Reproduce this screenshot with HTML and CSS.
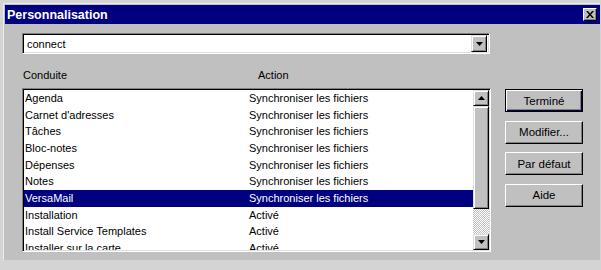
FILE: index.html
```html
<!DOCTYPE html>
<html lang="fr">
<head>
<meta charset="utf-8">
<title>Personnalisation</title>
<link rel="stylesheet" href="styles.css">
</head>
<body>
<div class="window">
  <div class="titlebar">
    <span class="title">Personnalisation</span>
    <span class="close"><svg width="8" height="7" viewBox="0 0 8 7"><path d="M0 0h2l2 2.5L6 0h2L5 3.5 8 7H6L4 4.5 2 7H0l3-3.5z" fill="#000"/></svg></span>
  </div>
  <div class="content">
    <div class="combo">
      <span class="combo-text">connect</span>
      <span class="btn3d dd"><svg width="7" height="4" viewBox="0 0 7 4"><path d="M0 0h7L3.5 4z" fill="#000"/></svg></span>
    </div>
    <div class="main">
      <div class="left">
        <div class="headers">
          <span class="h1">Conduite</span>
          <span class="h2">Action</span>
        </div>
        <div class="list">
          <div class="rows">
            <div class="row"><span class="c1">Agenda</span><span>Synchroniser les fichiers</span></div>
            <div class="row"><span class="c1">Carnet d'adresses</span><span>Synchroniser les fichiers</span></div>
            <div class="row"><span class="c1">Tâches</span><span>Synchroniser les fichiers</span></div>
            <div class="row"><span class="c1">Bloc-notes</span><span>Synchroniser les fichiers</span></div>
            <div class="row"><span class="c1">Dépenses</span><span>Synchroniser les fichiers</span></div>
            <div class="row"><span class="c1">Notes</span><span>Synchroniser les fichiers</span></div>
            <div class="row selected"><span class="c1">VersaMail</span><span>Synchroniser les fichiers</span></div>
            <div class="row"><span class="c1">Installation</span><span>Activé</span></div>
            <div class="row"><span class="c1">Install Service Templates</span><span>Activé</span></div>
            <div class="row"><span class="c1">Installer sur la carte</span><span>Activé</span></div>
          </div>
          <div class="scrollbar">
            <span class="btn3d sb-btn"><svg width="7" height="4" viewBox="0 0 7 4"><path d="M3.5 0L7 4H0z" fill="#000"/></svg></span>
            <span class="btn3d thumb"></span>
            <span class="track"></span>
            <span class="btn3d sb-btn"><svg width="7" height="4" viewBox="0 0 7 4"><path d="M0 0h7L3.5 4z" fill="#000"/></svg></span>
          </div>
        </div>
      </div>
      <div class="buttons">
        <span class="button default">Terminé</span>
        <span class="button">Modifier...</span>
        <span class="button">Par défaut</span>
        <span class="button">Aide</span>
      </div>
    </div>
  </div>
</div>
</body>
</html>
```
FILE: styles.css
```css
html, body {
  margin: 0;
  padding: 0;
}
body {
  width: 601px;
  height: 270px;
  background: #d4d4d4;
  font-family: "Liberation Sans", Arial, sans-serif;
  font-size: 11px;
  color: #000;
  overflow: hidden;
}
.window {
  margin: 3px 1px 0 3px;
  height: 257px;
  background: #c0c0c0;
  border-top: 1px solid #ececec;
  border-left: 1px solid #ececec;
  padding: 1px 0 0 1px;
  box-sizing: border-box;
}
.titlebar {
  height: 19px;
  background: #000080;
  display: flex;
  align-items: center;
  justify-content: space-between;
  padding: 0 3px 0 2px;
}
.title {
  color: #fff;
  font-weight: bold;
  font-size: 12.5px;
}
.close {
  width: 14px;
  height: 13px;
  box-sizing: border-box;
  background: #c0c0c0;
  border: 1px solid;
  border-color: #fff #000 #000 #fff;
  box-shadow: inset -1px -1px #808080;
  display: flex;
  align-items: center;
  justify-content: center;
}
.content {
  padding: 9px 0 0 17px;
}
.combo {
  width: 468px;
  height: 21px;
  box-sizing: border-box;
  background: #fff;
  border: 1px solid;
  border-color: #808080 #fff #fff #808080;
  box-shadow: inset 1px 1px #000, inset -1px -1px #dfdfdf;
  display: flex;
  align-items: center;
  justify-content: space-between;
  padding: 1px 2px 1px 2px;
}
.combo-text {
  padding-left: 2px;
}
.btn3d {
  background: #c0c0c0;
  box-sizing: border-box;
  border: 1px solid;
  border-color: #dfdfdf #000 #000 #dfdfdf;
  box-shadow: inset 1px 1px #fff, inset -1px -1px #808080;
  display: flex;
  align-items: center;
  justify-content: center;
}
.dd {
  width: 16px;
  height: 17px;
}
.main {
  display: flex;
  gap: 14px;
}
.headers {
  display: flex;
  margin-top: 14px;
  line-height: 14px;
  height: 14px;
  margin-bottom: 6px;
}
.h1 {
  padding-left: 1px;
  width: 235px;
}
.list {
  width: 469px;
  height: 164px;
  box-sizing: border-box;
  background: #fff;
  border: 1px solid;
  border-color: #808080 #fff #fff #808080;
  box-shadow: inset 1px 1px #000, inset -1px -1px #dfdfdf;
  padding: 1px;
  display: flex;
}
.rows {
  flex: 1;
  overflow: hidden;
  height: 160px;
}
.row {
  display: flex;
  height: 16.67px;
  line-height: 16.67px;
  white-space: nowrap;
}
.c1 {
  width: 224px;
  padding-left: 1px;
}
.selected {
  background: #000080;
  color: #fff;
}
.scrollbar {
  width: 16px;
  display: flex;
  flex-direction: column;
}
.sb-btn {
  height: 16px;
}
.thumb {
  height: 103px;
}
.track {
  flex: 1;
  background: repeating-conic-gradient(#c0c0c0 0 25%, #fff 0 50%) 0 0 / 2px 2px;
}
.buttons {
  display: flex;
  flex-direction: column;
  gap: 8.67px;
  padding-top: 35px;
}
.button {
  width: 78px;
  height: 23px;
  box-sizing: border-box;
  background: #c0c0c0;
  border: 1px solid;
  border-color: #fff #000 #000 #fff;
  box-shadow: inset -1px -1px #808080;
  display: flex;
  align-items: center;
  justify-content: center;
  font-size: 11.5px;
}
.button.default {
  border-color: #000;
  box-shadow: inset 1px 1px #fff, inset -1px -1px #000040, inset -2px -2px #808080;
}
```
